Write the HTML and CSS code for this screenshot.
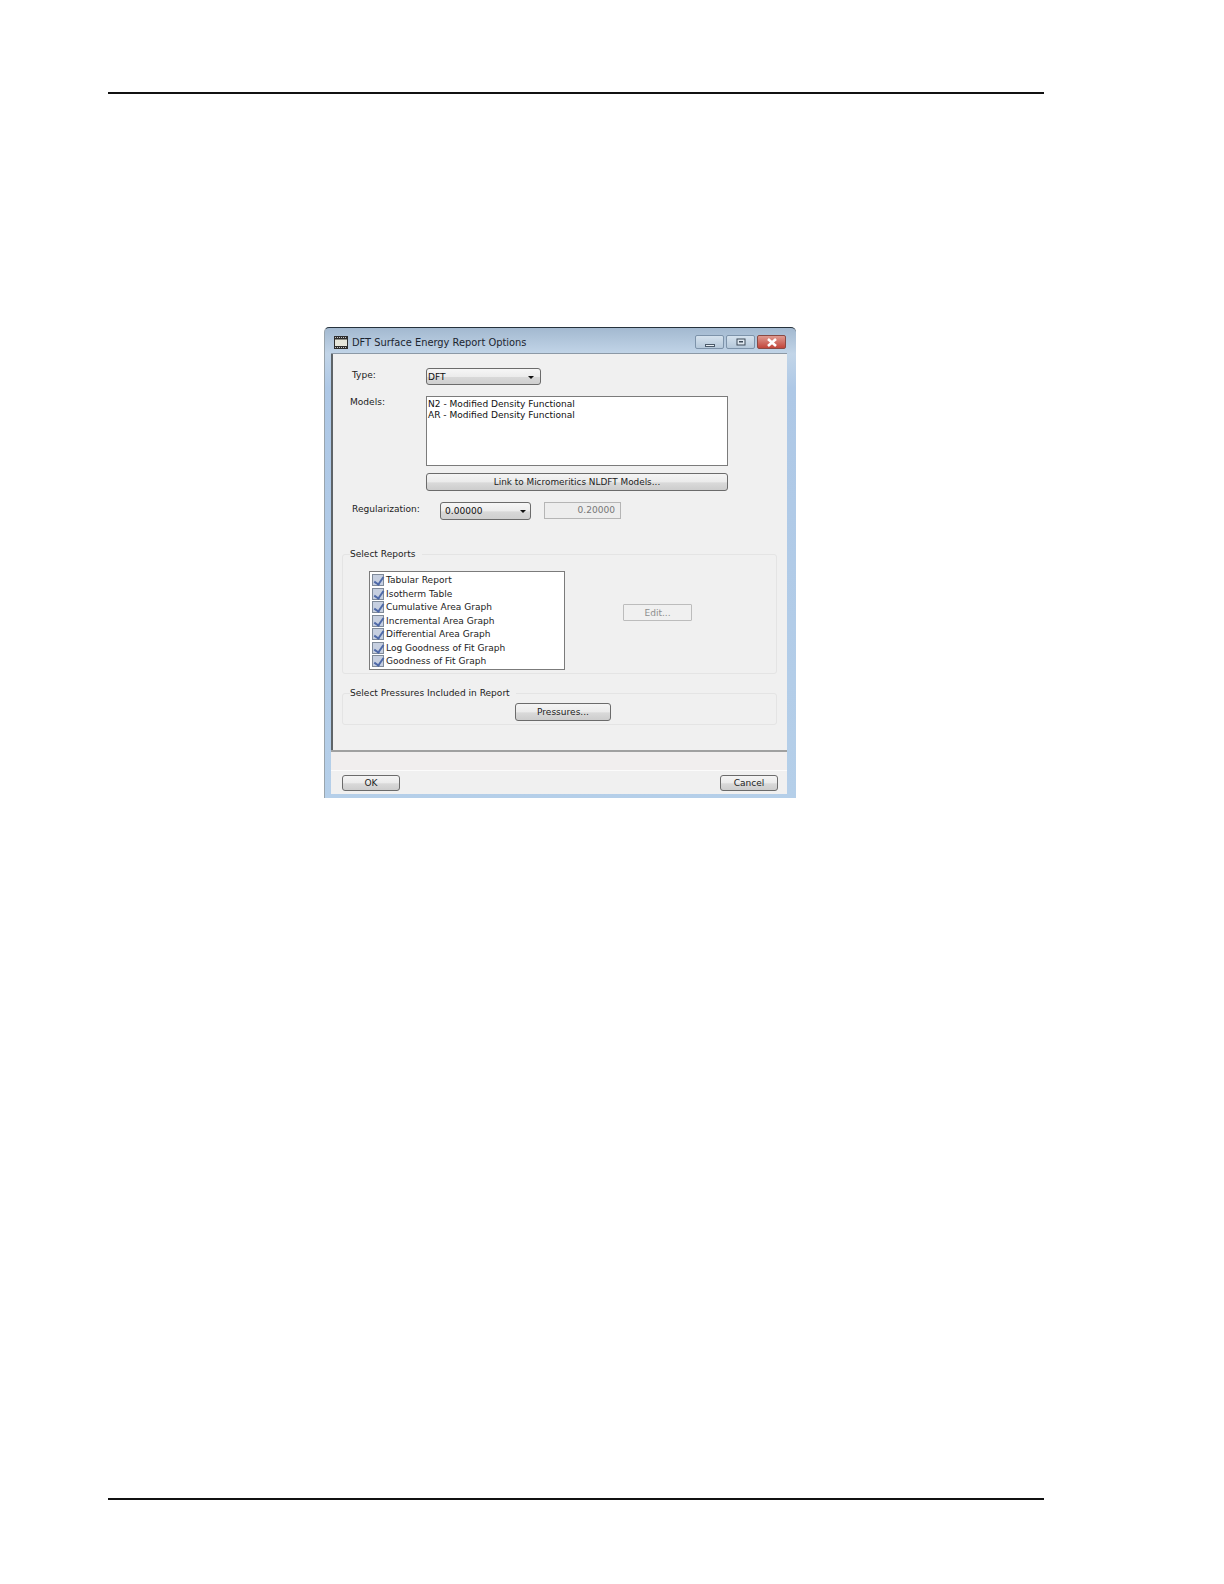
FILE: index.html
```html
<!DOCTYPE html>
<html lang="en">
<head>
    <meta charset="UTF-8">
    <title>DFT Surface Energy Report Options</title>
    <link rel="stylesheet" href="styles.css">
</head>
<body>
    <div class="page">
        <div class="rule"></div>

        <div class="dialog">
            <div class="titlebar">
                <svg class="app-icon" width="14" height="13" viewBox="0 0 14 13">
                    <rect x="0" y="0" width="14" height="13" fill="#2e2e2e"/>
                    <rect x="1" y="3" width="12" height="7" fill="#e6e6da"/>
                    <rect x="1" y="3" width="12" height="1" fill="#8f8f86"/>
                    <path d="M1 1.5 H13 M1 11.5 H13" stroke="#c8c8c8" stroke-width="1" stroke-dasharray="1 1"/>
                </svg>
                <span class="title">DFT Surface Energy Report Options</span>
                <div class="win-buttons">
                    <div class="win-btn"><svg width="10" height="12" viewBox="0 0 10 12"><rect x="0.5" y="8.5" width="9" height="2" fill="#e8eef4" stroke="#4a5a6a"/></svg></div>
                    <div class="win-btn"><svg width="10" height="8" viewBox="0 0 10 8"><rect x="1" y="1" width="8" height="6" fill="#dfe8f0" stroke="#3d4a58"/><rect x="3" y="3" width="4" height="1.5" fill="#3d4a58"/></svg></div>
                    <div class="win-btn close"><svg width="14" height="9" viewBox="0 0 14 9"><path d="M3 1 L11 8 M11 1 L3 8" stroke="#fff" stroke-width="2.6"/></svg></div>
                </div>
            </div>

            <div class="client">
                <div class="form">
                    <div class="row type-row">
                        <label class="label type-label">Type:</label>
                        <div class="select type-select"><span>DFT</span><i class="arrow"></i></div>
                    </div>
                    <div class="row models-row">
                        <label class="label models-label">Models:</label>
                        <div class="models-col">
                            <div class="listbox models">
                                <div>N2 - Modified Density Functional</div>
                                <div>AR - Modified Density Functional</div>
                            </div>
                            <button class="btn link-btn">Link to Micromeritics NLDFT Models...</button>
                        </div>
                    </div>
                    <div class="row reg-row">
                        <label class="label reg-label">Regularization:</label>
                        <div class="select reg-select"><span>0.00000</span><i class="arrow"></i></div>
                        <div class="readonly">0.20000</div>
                    </div>

                    <fieldset class="group reports">
                        <legend>Select Reports</legend>
                        <div class="listbox checks">
                            <div class="check"><i class="box"></i>Tabular Report</div>
                            <div class="check"><i class="box"></i>Isotherm Table</div>
                            <div class="check"><i class="box"></i>Cumulative Area Graph</div>
                            <div class="check"><i class="box"></i>Incremental Area Graph</div>
                            <div class="check"><i class="box"></i>Differential Area Graph</div>
                            <div class="check"><i class="box"></i>Log Goodness of Fit Graph</div>
                            <div class="check"><i class="box"></i>Goodness of Fit Graph</div>
                        </div>
                        <button class="btn edit-btn" disabled>Edit...</button>
                    </fieldset>

                    <fieldset class="group pressures">
                        <legend>Select Pressures Included in Report</legend>
                        <button class="btn pressures-btn">Pressures...</button>
                    </fieldset>
                </div>

                <div class="strip"></div>
                <div class="footer">
                    <button class="btn foot-btn">OK</button>
                    <button class="btn foot-btn">Cancel</button>
                </div>
            </div>
        </div>

        <div class="rule bottom"></div>
    </div>
</body>
</html>
```

FILE: styles.css
```css
* { margin: 0; padding: 0; box-sizing: border-box; }
body { font-family: "DejaVu Sans", sans-serif; font-size: 9.05px; background: #fff; color: #222; }
.page { width: 1224px; height: 1584px; padding: 92px 180px 0 108px; }
.rule { height: 2px; background: #111; }
.rule.bottom { margin-top: 700px; }

.dialog { width: 472px; height: 471px; margin: 233px 0 0 216px; padding: 0 9px 4px 6px; display: flex; flex-direction: column; border-top: 1px solid #26323c; border-left: 1px solid #9aa5ad; border-radius: 5px 5px 0 0; background: linear-gradient(180deg, #a3b9d0 0, #c2d5e8 26px, #aec8e6 60px, #b5cfe9 100%); }
.titlebar { height: 25px; flex: none; display: flex; align-items: center; padding-top: 3px; }
.app-icon { margin-left: 3px; }
.title { margin-left: 4px; font-size: 9.87px; color: #1c2530; }
.win-buttons { margin-left: auto; margin-right: 1px; display: flex; gap: 2px; }
.win-btn { width: 29px; height: 14px; border: 1px solid #7d93aa; border-radius: 2px; background: linear-gradient(180deg, #d5e2ee, #b5c8da); display: flex; align-items: center; justify-content: center; }
.win-btn.close { border-color: #8a4a44; background: linear-gradient(180deg, #e09a90, #c2463c); }

.client { flex: 1; display: flex; flex-direction: column; background: #f0f0f0; border-top: 1px solid #8c99a6; }
.form { flex: 1; padding-top: 14px; border-left: 2px solid #5e6468; }
.row { display: flex; }
.label { display: block; }
.type-row { padding-left: 19px; }
.type-label { width: 74px; padding-top: 2px; }
.select { height: 17px; border: 1px solid #6b6b6b; border-radius: 3px; background: linear-gradient(180deg, #f6f6f6 0, #ececec 50%, #d8d8d8 55%, #cfcfcf 100%); display: flex; align-items: center; justify-content: space-between; color: #111; }
.type-select { width: 115px; padding: 1px 6px 0 1px; }
.arrow { width: 0; height: 0; border-left: 3.5px solid transparent; border-right: 3.5px solid transparent; border-top: 3.5px solid #111; }

.models-row { margin-top: 11px; padding-left: 17px; }
.models-label { width: 76px; padding-top: 1px; }
.models-col { width: 302px; }
.listbox { background: #fff; border: 1px solid #7b7b7b; }
.models { height: 70px; padding: 2px 0 0 1px; line-height: 11px; color: #111; }
.btn { font: inherit; color: #222; border: 1px solid #6b6b6b; border-radius: 3px; background: linear-gradient(180deg, #f4f4f4 0, #ebebeb 50%, #d9d9d9 55%, #cdcdcd 100%); text-align: center; }
.link-btn { display: block; width: 100%; height: 18px; margin-top: 7px; font-size: 8.9px; }

.reg-row { margin-top: 11px; padding-left: 19px; height: 18px; }
.reg-label { width: 88px; padding-top: 2px; }
.reg-select { width: 91px; height: 18px; padding: 0 4px 0 4px; }
.readonly { width: 77px; height: 17px; margin-left: 13px; border: 1px solid #b5b5b5; background: #ededed; color: #777; text-align: right; padding: 2px 5px 0 0; }

.group { display: block; width: 435px; margin-left: 9px; border: 1px solid #e4e4e4; border-radius: 3px; }
.group legend { margin-left: 7px; padding-right: 6px; line-height: 12px; }
.reports { height: 126px; margin-top: 28px; display: flex; }
.checks { width: 196px; height: 99px; margin: 11px 0 0 26px; padding-top: 1.5px; }
.check { height: 13.5px; display: flex; align-items: center; padding-left: 2px; white-space: nowrap; }
.box { width: 12px; height: 12px; margin-right: 2px; flex: none; border: 1px solid #7f8a99; background: #c6cfe0; position: relative; }
.box::after { content: ""; position: absolute; left: 3px; top: 0; width: 4px; height: 8px; border: solid #4f6aa8; border-width: 0 2px 2px 0; transform: rotate(35deg); }
.edit-btn { width: 69px; height: 17px; margin: 44px 0 0 58px; border-color: #bcbcbc; border-radius: 1px; background: #f0f0f0; color: #8e8e8e; }
.pressures { height: 38px; margin-top: 13px; }
.pressures-btn { display: block; width: 96px; height: 18px; margin: 4px 0 0 172px; }

.strip { height: 21px; flex: none; background: #f1eeee; border-top: 2px solid #a0a0a0; border-bottom: 1px solid #fbfbfb; }
.footer { height: 23px; flex: none; display: flex; justify-content: space-between; padding: 4px 9px 0 11px; }
.foot-btn { width: 58px; height: 16px; }
```
